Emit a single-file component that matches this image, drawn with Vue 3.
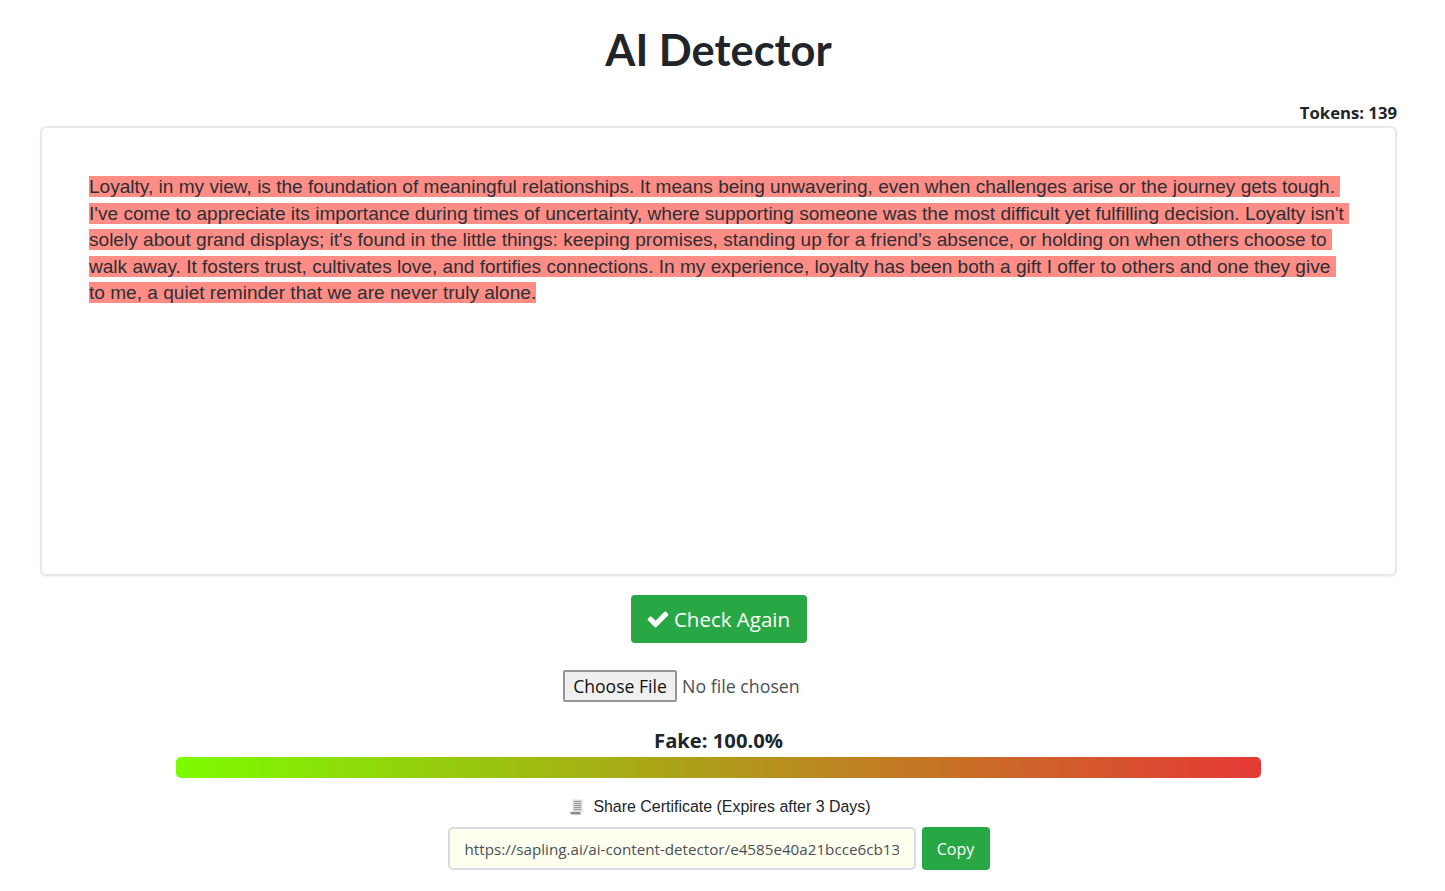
<template>
  <div class="page">
    <h1 class="title">AI Detector</h1>
    <div class="tokens">Tokens: {{ tokens }}</div>

    <div class="editor">
      <span v-for="(word, index) in words" :key="index" class="word">{{ word }}</span>
    </div>

    <div class="actions">
      <button class="btn check-btn" type="button">
        <svg class="check-icon" viewBox="0 0 1792 1792" aria-hidden="true">
          <path fill="#fff" d="M1671 566q0 40-28 68l-724 724-136 136q-28 28-68 28t-68-28l-136-136-362-362q-28-28-28-68t28-68l136-136q28-28 68-28t68 28l294 295 656-657q28-28 68-28t68 28l136 136q28 28 28 68z" />
        </svg>
        <span>Check Again</span>
      </button>
    </div>

    <div class="file-row">
      <input class="file-input" type="file" />
    </div>

    <div class="score-label">Fake: {{ score }}%</div>
    <div class="bar"></div>

    <div class="share-label">
      <svg class="scroll-icon" viewBox="0 0 14 16" aria-hidden="true">
        <path fill="#dcdcdc" d="M2.5 .5h10v13h-10z" />
        <path fill="#8c8c8c" d="M0 13h10l1 2.5H1z" />
        <path stroke="#8f8f8f" stroke-width=".9" d="M4 2.5h7M4 4.5h7M4 6.5h7M4 8.5h7M4 10.5h7" />
      </svg>
      <span>Share Certificate (Expires after 3 Days)</span>
    </div>
    <div class="share-row">
      <input class="share-input" type="text" readonly :value="shareUrl" />
      <button class="btn copy-btn" type="button">Copy</button>
    </div>
  </div>
</template>

<script setup>
const tokens = 139
const score = '100.0'
const shareUrl = 'https://sapling.ai/ai-content-detector/e4585e40a21bcce6cb13'

const text = "Loyalty, in my view, is the foundation of meaningful relationships. It means being unwavering, even when challenges arise or the journey gets tough. I've come to appreciate its importance during times of uncertainty, where supporting someone was the most difficult yet fulfilling decision. Loyalty isn't solely about grand displays; it's found in the little things: keeping promises, standing up for a friend's absence, or holding on when others choose to walk away. It fosters trust, cultivates love, and fortifies connections. In my experience, loyalty has been both a gift I offer to others and one they give to me, a quiet reminder that we are never truly alone."
// every word keeps its trailing space so the highlight runs through it
const words = text.split(' ').map((word, i, all) => (i < all.length - 1 ? word + ' ' : word))
</script>

<style>
body {
  background: #fff;
}
</style>

<style scoped>
.page {
  width: 1437px;
  box-sizing: border-box;
  padding: 0 40px;
  color: #212529;
  font-family: "Open Sans", "Noto Sans", sans-serif;
}

.title {
  margin: 0;
  padding-top: 22px;
  height: 70px;
  text-align: center;
  font-family: Lato, sans-serif;
  font-size: 43.4px;
  font-weight: 700;
  line-height: 55px;
}

.tokens {
  height: 34px;
  line-height: 22px;
  padding-top: 10px;
  box-sizing: border-box;
  text-align: right;
  font-size: 16.7px;
  font-weight: 700;
}

.editor {
  box-sizing: border-box;
  height: 450px;
  padding: 46px 47px;
  border: 2px solid #e8e8e8;
  border-radius: 6px;
  box-shadow: 0 1px 2px rgba(0, 0, 0, 0.06);
  font-family: "Liberation Sans", Arial, sans-serif;
  font-size: 19.07px;
  line-height: 26.6px;
  color: #2b2f36;
  white-space: pre-wrap;
}

.word {
  background: #ff8d85;
}

.actions {
  margin-top: 19px;
  display: flex;
  justify-content: center;
}

.btn {
  border: none;
  background: #28a745;
  color: #fff;
  border-radius: 4px;
  font-family: "Open Sans", "Noto Sans", sans-serif;
}

.check-btn {
  width: 176px;
  height: 48px;
  font-size: 20.5px;
  display: flex;
  align-items: center;
  justify-content: center;
  gap: 4px;
  padding: 0;
}

.check-icon {
  width: 24px;
  height: 24px;
  margin-left: -1px;
}

.file-row {
  margin-top: 27px;
  display: flex;
  justify-content: center;
  height: 32px;
}

.file-input {
  width: 311px;
  font-family: "Open Sans", "Noto Sans", sans-serif;
  font-size: 17.8px;
  color: #495057;
}

.file-input::file-selector-button {
  width: 114px;
  height: 32px;
  margin-right: 5px;
  padding: 0;
  font-family: inherit;
  font-size: 17.6px;
  color: #111;
  background: #efefef;
  border: 2px solid #98949a;
  border-radius: 2px;
}

.score-label {
  margin-top: 25px;
  text-align: center;
  font-size: 20.2px;
  font-weight: 700;
  line-height: 27px;
}

.bar {
  width: 80%;
  height: 21px;
  margin: 3px auto 0;
  border-radius: 5px;
  background: linear-gradient(to right, #7cfc00, #e53935);
}

.share-label {
  margin-top: 19px;
  display: flex;
  align-items: center;
  justify-content: center;
  gap: 9px;
  font-family: "Liberation Sans", Arial, sans-serif;
  font-size: 15.95px;
  line-height: 20px;
  padding-left: 4px;
}

.scroll-icon {
  width: 14px;
  height: 16px;
}

.share-row {
  margin-top: 10px;
  display: flex;
  justify-content: center;
  gap: 6px;
}

.share-input {
  box-sizing: border-box;
  width: 468px;
  height: 43px;
  padding: 0 15px;
  border: 2px solid #d9dbe3;
  border-radius: 5px;
  background: #fffff0;
  color: #495057;
  font-family: "Open Sans", "Noto Sans", sans-serif;
  font-size: 15.2px;
  outline: none;
}

.copy-btn {
  width: 68px;
  height: 43px;
  font-size: 16px;
  padding: 0;
}
</style>
